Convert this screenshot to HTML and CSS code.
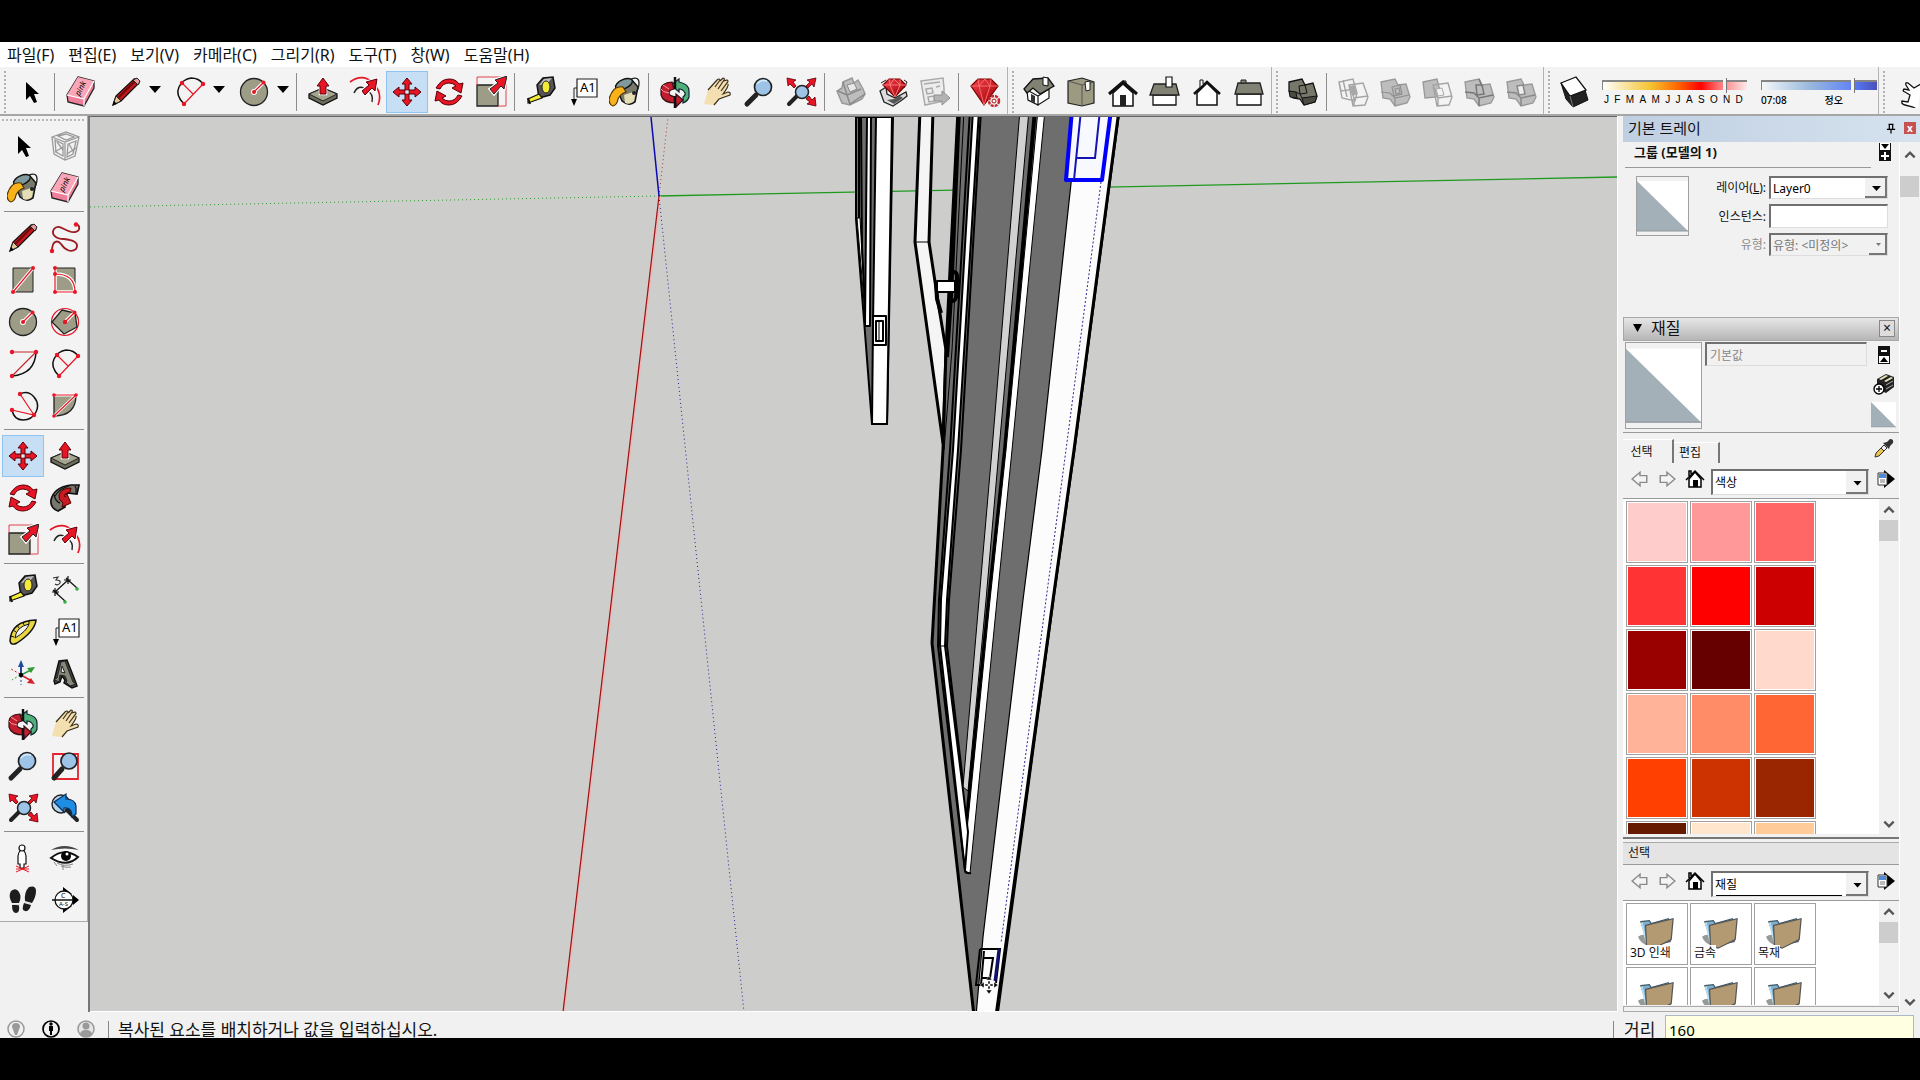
FILE: index.html
```html
<!DOCTYPE html>
<html lang="ko">
<head>
    <meta charset="UTF-8">
    <meta name="viewport" content="width=device-width, initial-scale=1.0">
    <title>SketchUp</title>
    <link rel="stylesheet" href="styles.css">
</head>
<body>
    <!-- Icon set shared by both toolbars and the tray -->
    <svg class="sprite" aria-hidden="true">
        <defs>
            <linearGradient id="gem-fill" x1="0" y1="0" x2="1" y2="1">
                <stop offset="0" stop-color="#f0404a"/><stop offset="1" stop-color="#a00008"/>
            </linearGradient>
            <symbol id="i-select" viewBox="0 0 32 32"><path d="M11 6v18l4-4 4 7 3-1-3-8h5z" fill="#000"/></symbol>
            <symbol id="i-component" viewBox="0 0 32 32"><g fill="none" stroke="#999" stroke-width="1.3"><path d="M3 7l14-5 13 5-4 19-10 4-11-6zM3 7l13 5 14-5M16 12v18M6 10l1 12 7 4V14zM19 14l8-3-3 13-6 3zM9 6l8-2 8 3-8 3z"/><path d="M6 22l8-5M18 24l9-6M8 12l6 8M20 14l5 9"/></g></symbol>
            <symbol id="i-paint" viewBox="0 0 32 32"><path d="M7 10l6 15q7 6 13 1l3-15-6-7z" fill="#77796b" stroke="#111" stroke-width="1.4"/><path d="M15 19l12-4-2 10q-4 4-9 2z" fill="#e5ddb3"/><ellipse cx="15" cy="8" rx="9" ry="4.500" transform="rotate(-24 15 8)" fill="#7f999d" stroke="#111" stroke-width="1.400"/><path d="M22 3q8-3 8 4t-4 10" fill="none" stroke="#222" stroke-width="1.300"/><circle cx="25" cy="17" r="2" fill="#222"/><path d="M14 11Q4 9 0 23q0 6 4 7 4-1 5-7 2-5 8-7z" fill="#f9b219" stroke="#4b3300" stroke-width="1.200"/></symbol>
            <symbol id="i-eraser" viewBox="0 0 32 32"><path d="M13 1l16 4v7L19 30 3 26l-1-7z" fill="#ee7e99" stroke="#222" stroke-width="1.300"/><path d="M13 1l16 4-10 18-17-4z" fill="#f9a6b8"/><path d="M2 19l17 4 10-18M19 23v7" fill="none" stroke="#fff" stroke-width="1.200"/><text x="11" y="19" font-size="8" font-family="Liberation Serif" font-style="italic" transform="rotate(-64 14 17)">pink</text></symbol>
            <symbol id="i-line" viewBox="0 0 32 32"><path d="M3 29l3-9L24 3q5-1 5 4L11 25z" fill="#c4161d" stroke="#111" stroke-width="1.300"/><path d="M8 22L25 5" stroke="#6b0a0e" stroke-width="2"/><path d="M6 20l5 5-8 4z" fill="#dfc99a" stroke="#222"/><path d="M3 29l1-4 3 3z" fill="#000"/><path d="M23 4l5 5 2-4-3-3z" fill="#e49c9c" stroke="#222"/></symbol>
            <symbol id="i-freehand" viewBox="0 0 32 32"><path d="M3 29C3 18 9 18 12 22c4 6 10 9 15 5 4-7-4-9-12-10C6 17 2 12 5 7c5-7 13 5 21 3 6-1 5-7 1-8" fill="none" stroke="#9c1a22" stroke-width="1.800"/><circle cx="3" cy="29" r="2.200" fill="#e81525"/><circle cx="27" cy="2.500" r="2.200" fill="#e81525"/></symbol>
            <symbol id="i-rect" viewBox="0 0 32 32"><path d="M6 4h20v24H6z" fill="#9d9c87" stroke="#222"/><path d="M6 28L26 4" stroke="#fff" stroke-width="3.500"/><path d="M6 28L26 4" stroke="#e81525" stroke-width="1.200"/><circle cx="6" cy="28" r="2" fill="#e81525"/><circle cx="26" cy="4" r="2" fill="#e81525"/></symbol>
            <symbol id="i-rotrect" viewBox="0 0 32 32"><path d="M6 4h20v24H6z" fill="#9d9c87" stroke="#222"/><path d="M6 4v24h20M6 10q20 0 20 18" fill="none" stroke="#fff" stroke-width="3.500"/><path d="M6 4v24h20M6 10q20 0 20 18" fill="none" stroke="#e81525" stroke-width="1.200"/><circle cx="6" cy="4" r="2" fill="#e81525"/><circle cx="6" cy="10" r="2" fill="#e81525"/><circle cx="6" cy="28" r="2" fill="#e81525"/><circle cx="26" cy="28" r="2" fill="#e81525"/></symbol>
            <symbol id="i-circle" viewBox="0 0 32 32"><circle cx="16" cy="16" r="13.500" fill="#9d9c87" stroke="#222" stroke-width="1.300"/><path d="M16 16l9-9" stroke="#fff" stroke-width="3.500"/><circle cx="16" cy="16" r="3" fill="#fff"/><path d="M16 16l9-9" stroke="#e81525" stroke-width="1.300"/><circle cx="16" cy="16" r="2" fill="#e81525"/><circle cx="25.500" cy="6.500" r="2" fill="#e81525"/></symbol>
            <symbol id="i-polygon" viewBox="0 0 32 32"><circle cx="16" cy="16" r="13.500" fill="none" stroke="#e81525" stroke-width="1.200"/><path d="M13 4l13 3 2 14-13 7L3 16z" fill="#9d9c87" stroke="#222" stroke-width="1.300"/><path d="M16 16l9-9" stroke="#fff" stroke-width="3.500"/><path d="M16 16l9-9" stroke="#e81525" stroke-width="1.300"/><circle cx="16" cy="16" r="2.200" fill="#e81525"/><circle cx="25.500" cy="6.500" r="2" fill="#e81525"/></symbol>
            <symbol id="i-arc" viewBox="0 0 32 32"><path d="M5 28Q28 26 29 4" fill="none" stroke="#111" stroke-width="1.500"/><path d="M5 4h24L5 28" fill="none" stroke="#c4262d" stroke-width="1.200"/><circle cx="5" cy="4" r="2.200" fill="#e81525"/><circle cx="29" cy="4" r="2.200" fill="#e81525"/><circle cx="5" cy="28" r="2.200" fill="#e81525"/></symbol>
            <symbol id="i-arc2" viewBox="0 0 32 32"><path d="M10 28Q1 19 5 11T17 2q8 0 12 6" fill="none" stroke="#111" stroke-width="1.500"/><path d="M10 28L29 8M8 7l11 11" stroke="#e81525" stroke-width="1.200"/><circle cx="10" cy="28" r="2.200" fill="#e81525"/><circle cx="29" cy="8" r="2.200" fill="#e81525"/><circle cx="8" cy="7" r="2.200" fill="#e81525"/></symbol>
            <symbol id="i-arc3" viewBox="0 0 32 32"><path d="M13 4q8-4 14 3t2 15-13 8-11-10" fill="none" stroke="#111" stroke-width="1.500"/><path d="M13 4l14 21-22-5" fill="none" stroke="#e81525" stroke-width="1.200"/><circle cx="13" cy="4" r="2.200" fill="#e81525"/><circle cx="27" cy="25" r="2.200" fill="#e81525"/><circle cx="5" cy="20" r="2.200" fill="#e81525"/></symbol>
            <symbol id="i-pie" viewBox="0 0 32 32"><path d="M5 5h22Q27 26 5 26z" fill="#9d9c87" stroke="#222" stroke-width="1.300"/><path d="M27 5H5M5 26L27 5" fill="none" stroke="#fff" stroke-width="3"/><path d="M5 5h22L5 26" fill="none" stroke="#e81525" stroke-width="1.200"/><circle cx="5" cy="5" r="1.800" fill="#e81525"/><circle cx="27" cy="5" r="1.800" fill="#e81525"/><circle cx="5" cy="26" r="1.800" fill="#e81525"/></symbol>
            <symbol id="i-pushpull" viewBox="0 0 32 32"><path d="M2 18l14-6 14 6v4L16 29 2 22z" fill="#6d6d5c" stroke="#111" stroke-width="1.300"/><path d="M2 18l14-6 14 6-14 7z" fill="#a5a58f" stroke="#222"/><path d="M13 18v-8h-3l6-8 6 8h-3v8z" fill="#e81525" stroke="#fff" stroke-width="2.500"/><path d="M13 18v-8h-3l6-8 6 8h-3v8z" fill="#e81525" stroke="#5c0006"/></symbol>
            <symbol id="i-offset" viewBox="0 0 32 32"><path d="M1 6Q14-3 24 7t5 22" fill="none" stroke="#e81525" stroke-width="1.700"/><path d="M5 17q4-9 12-4t6 13" fill="none" stroke="#222" stroke-width="1.400"/><path d="M13 15l7-6-3-3 11-3-2 12-3-3-7 7z" fill="#e81525" stroke="#fff" stroke-width="3"/><path d="M13 15l7-6-3-3 11-3-2 12-3-3-7 7z" fill="#e81525" stroke="#5c0006"/></symbol>
            <symbol id="i-move" viewBox="0 0 32 32"><path d="M16 2l5 6h-3v6h-4V8h-3zM16 30l5-6h-3v-6h-4v6h-3zM2 16l6-5v3h6v4H8v3zM30 16l-6-5v3h-6v4h6v3z" fill="#e81525" stroke="#5c0006"/><path d="M14.500 14.500h3v3h-3z" fill="#d9e8f5"/></symbol>
            <symbol id="i-rotate" viewBox="0 0 32 32"><path d="M3 12Q8 3 16 3q7 0 10 5l4-1-2 10-9-5 4-2q-3-3-7-3-6 0-9 6z" fill="#e81525" stroke="#5c0006"/><path d="M29 20q-5 9-13 9-7 0-10-5l-4 1 2-10 9 5-4 2q3 3 7 3 6 0 9-6z" fill="#e81525" stroke="#5c0006"/></symbol>
            <symbol id="i-scale" viewBox="0 0 32 32"><path d="M2 9h21v21H2z" fill="#9d9c87" stroke="#222" stroke-width="1.300"/><path d="M2 1h29v29H23M2 1v8" fill="none" stroke="#e0444c"/><path d="M15 13l8-6-3-3 12-4-3 13-3-3-7 8z" fill="#e81525" stroke="#fff" stroke-width="3"/><path d="M15 13l8-6-3-3 12-4-3 13-3-3-7 8z" fill="#e81525" stroke="#222"/></symbol>
            <symbol id="i-followme" viewBox="0 0 32 32"><path d="M30 3L22 3Q5 5 2 18q-1 8 7 11l7-4-1-6q-3-4 3-8l10 1z" fill="#77776b" stroke="#111" stroke-width="1.700"/><path d="M5 13q2 7 6 8M20 4q-10 3-14 10M26 4q2 3 1 7" fill="none" stroke="#111" stroke-width="1.300"/><path d="M22 6q-10 0-12 7-1 5 4 8l-1 4 9-4-4-9-2 3q-2-3 5-5z" fill="#c61b20" stroke="#500"/></symbol>
            <symbol id="i-tape" viewBox="0 0 32 32"><path d="M12 9l6-7 10-1 2 11-5 7-11 3z" fill="#555" stroke="#111" stroke-width="1.500"/><path d="M14 9l5-6 8-1-5 6z" fill="#bbb"/><ellipse cx="21" cy="11" rx="4" ry="6" fill="#f5ea37" stroke="#222"/><path d="M14 18L3 23v4l14-5z" fill="#f5ea37" stroke="#111" stroke-width="1.200"/><path d="M3 22l2 6" stroke="#111" stroke-width="2"/></symbol>
            <symbol id="i-dimension" viewBox="0 0 32 32"><path d="M6 18L19 6M6 18l10 9M19 6l9 8M3 18h7M6 14v8M15 6h7M19 2v8M4 16l5 4M17 4l4 4" stroke="#111" stroke-width="1.200" fill="none"/><path d="M4 4l5-1-2 3q5 0 4 3-2 3-5 1" fill="none" stroke="#333" stroke-width="1.200"/><circle cx="16" cy="28" r="1.800" fill="#36ae45"/><circle cx="28" cy="15" r="1.800" fill="#36ae45"/></symbol>
            <symbol id="i-protractor" viewBox="0 0 32 32"><path d="M3 25Q4 5 29 4 28 15 10 27q-6 3-7-2z" fill="#e9d843" stroke="#111" stroke-width="1.500"/><path d="M8 22Q9 11 22 8 20 15 8 22z" fill="#f3f3f3" stroke="#111"/><path d="M4 20l3 1M6 14l3 2M10 9l2 3M16 6l1 3M22 5v3" stroke="#111"/></symbol>
            <symbol id="i-text" viewBox="0 0 32 32"><path d="M10 3h20v18H10z" fill="#fff" stroke="#222" stroke-width="1.200"/><path d="M10 12H7v12" fill="none" stroke="#222"/><path d="M4 23h6l-3 7z"/><text x="13" y="16" font-size="13" font-family="Liberation Serif">A1</text></symbol>
            <symbol id="i-axes" viewBox="0 0 32 32"><path d="M14 17V7" stroke="#1e4b9c" stroke-width="2"/><path d="M14 2l-3 7h6z" fill="#1e4b9c"/><path d="M14 18v9" stroke="#1e4b9c" stroke-dasharray="2 2"/><path d="M14 17l10-5" stroke="#2d9a37" stroke-width="1.500"/><path d="M28 9l-8 1 4 5z" fill="#2d9a37"/><path d="M13 17l-8 5" stroke="#2d9a37" stroke-dasharray="2 2"/><path d="M14 17l9 5" stroke="#d4222c" stroke-width="1.500"/><path d="M28 26l-8-1 4-5z" fill="#d4222c"/><path d="M13 16l-9-5" stroke="#d4222c" stroke-dasharray="2 2"/><circle cx="14" cy="17" r="2.200"/></symbol>
            <symbol id="i-text3d" viewBox="0 0 32 32"><path d="M5 23l5-20 8-1 9 23 1 3-5 2-8-5 1-3-3-4-2 6-5 2z" fill="#45453d" stroke="#111" stroke-width="1.500"/><path d="M5 22l3-2 4-16 4-1 8 21 3 2-6 2-4-4 1-1-2-5-5-1-1 5 1 2z" fill="#88887a" stroke="#222"/><path d="M12 14l1-6 3 7z" fill="#f3f3f3" stroke="#222"/></symbol>
            <symbol id="i-orbit" viewBox="0 0 32 32"><path d="M12 9l8-6v3q10 2 10 9v6q-1 4-6 6v-6q3-2 2-4-2-4-6-4v3z" fill="#4fb179" stroke="#123" stroke-width="1.200"/><path d="M13 6Q2 7 2 13v6q2 8 15 8v4l7-7-7-6v3q-7-1-7-4 0-3 5-4z" fill="#c11d2f" stroke="#311" stroke-width="1.200"/><path d="M2 13q1 3 8 4M4 9l6 4" fill="none" stroke="#f0a0a0"/><path d="M16 1v12M16 20v12" stroke="#111" stroke-width="2.500"/></symbol>
            <symbol id="i-pan" viewBox="0 0 32 32"><path d="M3 28l4-14L16 4q2-2 3 0l3-2q2 0 1 2l3 0q2 1 0 3l2 1q0 2-2 4l-4 6 5-2q3 0 2 3L18 23l-5 6z" fill="#f3dfb0"/><path d="M7 14l9-10q2-2 3 0l-5 7M19 5l3-3q2 0 1 2l-6 9M23 5l3-1q2 1 0 3l-6 8M27 8q1 2-5 10l5-2q3 0 2 3L18 23l-5 6" fill="none" stroke="#3b3020" stroke-width="1.200"/></symbol>
            <symbol id="i-zoom" viewBox="0 0 32 32"><path d="M4 28l9-9" stroke="#222" stroke-width="5" stroke-linecap="round"/><circle cx="20" cy="11" r="8.500" fill="#9dc3e6" stroke="#222" stroke-width="1.700"/><path d="M14 8q4-5 10-3" fill="none" stroke="#d9ecfb" stroke-width="1.500"/></symbol>
            <symbol id="i-zoomwin" viewBox="0 0 32 32"><path d="M4 4h25v25H4z" fill="none" stroke="#e3252f" stroke-width="1.800"/><path d="M5 28l8-9" stroke="#222" stroke-width="5" stroke-linecap="round"/><circle cx="20" cy="11" r="8" fill="#9dc3e6" stroke="#222" stroke-width="1.700"/></symbol>
            <symbol id="i-extents" viewBox="0 0 32 32"><path d="M4 28l8-8" stroke="#222" stroke-width="4" stroke-linecap="round"/><circle cx="17" cy="16" r="6.500" fill="#9dc3e6" stroke="#222" stroke-width="1.500"/><g fill="#e81525" stroke="#5c0006" stroke-width=".8"><path d="M2 2l9 2-3 2 3 4-2 2-4-4-2 2z"/><path d="M31 2l-2 9-2-3-4 4-2-2 4-4-3-2z"/><path d="M31 30l-9-2 3-2-4-3 3-3 3 4 3-3z"/></g></symbol>
            <symbol id="i-prev" viewBox="0 0 32 32"><circle cx="12" cy="12" r="9" fill="#b7d4ed" stroke="#222" stroke-width="1.400"/><path d="M18 18l10 10" stroke="#222" stroke-width="4" stroke-linecap="round"/><path d="M5 10l12-8v5q9 0 10 7v8l-4 3q0-10-8-9v4z" fill="#1e8de4" stroke="#0a2d55" stroke-width="1.200"/></symbol>
            <symbol id="i-camera" viewBox="0 0 32 32"><path d="M11 22v-8q1-6 4-6t4 6v8h-2v4h-4v-4z" fill="#fff" stroke="#111" stroke-width="1.200"/><circle cx="15" cy="6" r="3" fill="#fff" stroke="#111" stroke-width="1.200"/><path d="M9 24l13 6M22 24L9 30M9 27h13" stroke="#e81525"/></symbol>
            <symbol id="i-look" viewBox="0 0 32 32"><path d="M2 8Q15 0 30 8q-14-3-28 0z" fill="#444"/><path d="M2 16Q15 5 29 15q-11 11-27 1z" fill="#fff" stroke="#111" stroke-width="2"/><circle cx="17" cy="14" r="5"/><circle cx="18" cy="12" r="1.500" fill="#fff"/><path d="M8 21q7 4 16 1M12 24q5 2 10 1M5 20l3 4M14 23v5" stroke="#888" fill="none"/></symbol>
            <symbol id="i-walk" viewBox="0 0 32 32"><path d="M4 7q5-4 8 1t0 11l-7 0Q1 12 4 7zM5 21h7q1 8-3 8t-4-8zM22 3q7-2 7 4t-4 12l-7-2q-1-9 4-14zM17 19l7 2q-2 7-6 6t-1-8z" fill="#1d1d1d"/><path d="M5 20l8 1M17 18l8 2" stroke="#ddd"/></symbol>
            <symbol id="i-section" viewBox="0 0 32 32"><path d="M14 3l9 7H14zM14 29l9-7H14z"/><circle cx="15" cy="16" r="9" fill="#fff" stroke="#111" stroke-width="1.300"/><path d="M3 16h25" stroke="#111" stroke-width="1.500"/><path d="M24 11l6 5-6 5z"/><text x="12" y="14" font-size="7" font-family="Liberation Sans">C</text><text x="10" y="22" font-size="6" font-family="Liberation Sans">A-S</text></symbol>
            <symbol id="i-getmodel" viewBox="0 0 32 32"><path d="M8 6l9-4 2 5 4-3 5 9 2 5-3 5-12 6-8-2-5-12 5-3z" fill="#bdbdbd" stroke="#999" stroke-width="1.500"/><path d="M3 15l9 4 3 9 15-10M12 19l14-6M8 6l4 13" fill="none" stroke="#8a8a8a" stroke-width="1.500"/><path d="M12 9l7-2 3 6-7 3z" fill="#e8e8e8" stroke="#888"/></symbol>
            <symbol id="i-warehouse" viewBox="0 0 32 32"><path d="M3 15l6-4 1 7 8 4 11-6 1 4-5 4-9 6-9-4z" fill="#ddd" stroke="#222" stroke-width="1.300"/><path d="M10 24l7 4 9-6-3-2-6 3z" fill="#555"/><path d="M27 4l3 2-3 6M4 7l5-3" stroke="#222" fill="none"/><path d="M6 9l6-6h11l6 6-11 12z" fill="url(#gem-fill)" stroke="#700" stroke-width="1.200"/><path d="M6 9h23M12 3l1 6 5 12 5-12V3M13 9l4-6 6 6" fill="none" stroke="#ff8b8b" stroke-width=".8"/></symbol>
            <symbol id="i-share" viewBox="0 0 32 32"><path d="M2 5l22-3 1 10v13l-19 4z" fill="#ececec" stroke="#aaa" stroke-width="1.500"/><path d="M5 8l16-2M7 13l6-1 1 5-6 1zM17 11l4-1M9 21l6-1 1 5-6 1z" fill="none" stroke="#aaa" stroke-width="1.500"/><path d="M15 19h8v-4l8 7-8 7v-4h-8z" fill="#b3b3b3" stroke="#909090"/></symbol>
            <symbol id="i-extension" viewBox="0 0 32 32"><path d="M2 10l7-7h13l7 7-14 19z" fill="url(#gem-fill)" stroke="#700" stroke-width="1.200"/><path d="M2 10h27M9 3l1 7 5 19 6-19 1-7M10 10l6-7 5 7" fill="none" stroke="#ff7272" stroke-width=".9"/><circle cx="25" cy="25" r="5" fill="#f3f3f3" stroke="#c52b33" stroke-width="2.500" stroke-dasharray="3 1"/><circle cx="25" cy="25" r="2" fill="#fff" stroke="#a11"/></symbol>
            <symbol id="i-iso" viewBox="0 0 32 32"><path d="M4 14l11 6v9L5 24zM15 20l11-7v9l-11 7z" fill="#fff" stroke="#111" stroke-width="1.200"/><path d="M1 13L10 3l15-1 6 8-14 8-7-6-6 5z" fill="#818174" stroke="#111" stroke-width="1.300"/><path d="M20 9V1l5 1v8z" fill="#fff" stroke="#111"/><path d="M8 18l4 2v7l-4-2z" fill="#333"/></symbol>
            <symbol id="i-top" viewBox="0 0 32 32"><path d="M3 5l14-3 12 4v21l-12 3-14-3z" fill="#9c9a80" stroke="#222" stroke-width="1.200"/><path d="M3 5l14 4 12-3M17 9v21" fill="none" stroke="#555"/><path d="M20 6l5-1v9l-4 1z" fill="#fff" stroke="#222"/></symbol>
            <symbol id="i-front" viewBox="0 0 32 32"><path d="M6 17v13h20V17L16 8z" fill="#fff" stroke="#111" stroke-width="1.500"/><path d="M2 18L16 6l14 12" fill="none" stroke="#111" stroke-width="3"/><path d="M13 19h6v11h-6z" fill="#222"/><path d="M16 5h3v3" fill="none" stroke="#111"/></symbol>
            <symbol id="i-right" viewBox="0 0 32 32"><path d="M4 19h23v10H4z" fill="#fff" stroke="#111" stroke-width="1.300"/><path d="M5 8h22l3 11H1z" fill="#818174" stroke="#222" stroke-width="1.300"/><path d="M17 1h6v10h-6z" fill="#fff" stroke="#111" stroke-width="1.200"/></symbol>
            <symbol id="i-back" viewBox="0 0 32 32"><path d="M6 17v12h20V17L16 7z" fill="#fff" stroke="#111" stroke-width="1.500"/><path d="M3 18L16 6l13 12" fill="none" stroke="#111" stroke-width="2.500"/><path d="M9 11V4h3v4" fill="#fff" stroke="#111"/></symbol>
            <symbol id="i-left" viewBox="0 0 32 32"><path d="M4 18h24v11H4z" fill="#fff" stroke="#111" stroke-width="1.300"/><path d="M5 7h22l3 11H2z" fill="#818174" stroke="#222" stroke-width="1.300"/><path d="M8 4h5v3H8z" fill="#818174" stroke="#222"/></symbol>
            <symbol id="i-outer" viewBox="0 0 32 32"><path d="M2 6l13-3 3 6 8-2 4 13-2 6-11 3-4-6-7-1-4-7z" fill="#77776a" stroke="#111" stroke-width="1.300"/><path d="M2 15l1 6 7 1-1-6zM15 22l15-2-2 6-11 3z" fill="#4b4b41" stroke="#111"/><path d="M12 10l6-1 2 8-7 1zM9 16l4 2 2 4" fill="none" stroke="#111"/></symbol>
            <symbol id="i-intersect" viewBox="0 0 32 32"><g fill="none" stroke="#a4a4a4" stroke-width="1.400"><path d="M2 6l14-3 4 14-2 8-13-3zM2 6l2 9 15-2M12 9l14-2 5 14-3 8-12 1zM12 9l5 13 14-2M17 22v8M6 4l4 17"/></g><path d="M12 10l6-1 2 9-4 2z" fill="#a8a8a8"/></symbol>
            <symbol id="i-union" viewBox="0 0 32 32"><path d="M2 6l14-3 3 6 8-1 4 13-3 6-12 3-5-7-7-1z" fill="#bdbdbd" stroke="#999" stroke-width="1.300"/><path d="M2 16l9 1 5 5 14-3M16 22v8M13 11l8-2 2 9-8 2zM16 13l4-1 1 5-4 1z" fill="none" stroke="#909090" stroke-width="1.200"/></symbol>
            <symbol id="i-subtract" viewBox="0 0 32 32"><path d="M2 6l14-3 3 12-3 6-12 1z" fill="#bdbdbd" stroke="#999" stroke-width="1.300"/><path d="M12 9l15-2 4 14-3 8-12 1zM12 9l5 13 14-2M17 22v8" fill="none" stroke="#a4a4a4" stroke-width="1.400"/><path d="M15 13l6-1 2 7-6 1z" fill="#f3f3f3" stroke="#aaa"/></symbol>
            <symbol id="i-trim" viewBox="0 0 32 32"><path d="M2 6l14-3 3 6 8-1 4 13-3 6-12 3-5-7-7-1z" fill="#bdbdbd" stroke="#999" stroke-width="1.300"/><path d="M2 16l9 1 5 5 14-3M16 22v8M13 9h6l2 9-7 1zM16 3l3 7" fill="none" stroke="#777" stroke-width="1.500"/></symbol>
            <symbol id="i-split" viewBox="0 0 32 32"><path d="M2 6l14-3 3 6 8-1 4 13-3 6-12 3-5-7-7-1z" fill="#bdbdbd" stroke="#999" stroke-width="1.300"/><path d="M2 16l9 1 5 5 14-3M16 22v8" fill="none" stroke="#888" stroke-width="1.500"/><path d="M12 10l6-1 2 9-6 1z" fill="#eee" stroke="#888" stroke-width="1.500"/></symbol>
            <symbol id="i-shadow" viewBox="0 0 32 32"><path d="M2 7l5 16 7 8 15-7-3-10z" fill="#222" stroke="#111"/><path d="M2 7l15-6 10 13-16 6z" fill="#fff" stroke="#111" stroke-width="1.300"/><path d="M11 20l3 11" stroke="#777"/></symbol>
            <symbol id="i-sandbox" viewBox="0 0 32 32"><path d="M27 8l-7 4-6-5q-3-1-2 2l3 5-5-1q-2 2 1 3l5 3-2 7-6-1q-1 3 3 4l8 2 5 3" fill="#fff" stroke="#111" stroke-width="1.300"/></symbol>
            <symbol id="i-back-arrow" viewBox="0 0 16 16"><path d="M1 8l7-6v3h6v6H8v3z" fill="#f4f4f4" stroke="#8b8b8b" stroke-width="1.300"/></symbol>
            <symbol id="i-fwd-arrow" viewBox="0 0 16 16"><path d="M15 8L8 2v3H2v6h6v3z" fill="#f4f4f4" stroke="#8b8b8b" stroke-width="1.300"/></symbol>
            <symbol id="i-home" viewBox="0 0 20 20"><path d="M4 10v8h12v-8l-6-7z" fill="#fff" stroke="#000" stroke-width="1.500"/><path d="M1 11l9-9 9 9M4 7V2h2v3" fill="none" stroke="#000" stroke-width="1.500"/><path d="M8 11h5v7H8z"/></symbol>
            <symbol id="i-details" viewBox="0 0 18 18"><path d="M7 0l11 9-11 9z"/><path d="M1 3h9v12H1z" fill="#fff" stroke="#333"/><path d="M2 4h7v4H2z" fill="#4a8dd6"/><path d="M3 10h5M3 12h5" stroke="#777"/></symbol>
            <symbol id="i-dropper" viewBox="0 0 20 20"><path d="M1 19l1-4 8-8 3 3-8 8z" fill="#e9c34d" stroke="#333"/><path d="M7 10l3-3 3 3-3 3z" fill="#eee" stroke="#333"/><path d="M9 5l6 6 1-3 3-3q1-4-3-4l-3 3z" fill="#333"/></symbol>
            <symbol id="i-create" viewBox="0 0 22 22"><path d="M4 6l9-5 8 3v10l-8 6-9-4z" fill="#222"/><path d="M6 6l7-4 2 1-7 4zM11 8l7-4 2 1-7 4z" fill="#e8e5b9"/><path d="M13 12l7-4M13 16l7-4" stroke="#aaa"/><circle cx="6" cy="16" r="5" fill="#fff" stroke="#000" stroke-width="1.400"/><path d="M3 16h6M6 13v6" stroke="#000" stroke-width="1.300"/></symbol>
            <symbol id="i-expand" viewBox="0 0 12 18"><path d="M0 0h12v18H0z" fill="#111"/><path d="M1 0h10v7H1z" fill="#fff"/><path d="M2 1h8L6 6z"/><path d="M5 9h2v3h3v2H7v3H5v-3H2v-2h3z" fill="#fff"/></symbol>
            <symbol id="i-shrink" viewBox="0 0 12 18"><path d="M0 0h12v18H0z" fill="#111"/><path d="M1 10h10v7H1z" fill="#fff"/><path d="M2 16h8l-4-5z"/><path d="M3 4h6v2H3z" fill="#fff"/></symbol>
            <symbol id="i-default" viewBox="0 0 50 58" preserveAspectRatio="none"><path d="M0 4h50v50H0z" fill="#fff"/><path d="M0 4l50 50H0z" fill="#a3b0b8"/><path d="M0 54h50" stroke="#8e979c"/></symbol>
            <symbol id="i-folder" viewBox="0 0 40 36"><path d="M1 22q5-4 9-1l4 11Q4 30 1 22z" fill="#999"/><path d="M4 6l9-1 2 3 18-5 2 24-22 5z" fill="#7fb0cf" stroke="#3e5866" stroke-width="1.200"/><path d="M5 7l5 21" stroke="#b7dcf2" stroke-width="2"/><path d="M9 10l29-7-2 22-18 9-8-3z" fill="#b49a72" stroke="#555" stroke-width="1.300"/></symbol>
            <symbol id="i-up" viewBox="0 0 12 12"><path d="M2 8l4-4 4 4" fill="none" stroke="#555" stroke-width="2"/></symbol>
            <symbol id="i-down" viewBox="0 0 12 12"><path d="M2 4l4 4 4-4" fill="none" stroke="#555" stroke-width="2"/></symbol>
        </defs>
    </svg>

    <div class="app">
        <nav class="menubar">
            <button>파일(F)</button>
            <button>편집(E)</button>
            <button>보기(V)</button>
            <button>카메라(C)</button>
            <button>그리기(R)</button>
            <button>도구(T)</button>
            <button>창(W)</button>
            <button>도움말(H)</button>
        </nav>

        <div class="toolbar">
            <div class="tool-group">
                <span class="grip"></span>
                <button class="tool" aria-label="선택"><svg><use href="#i-select"/></svg></button>
                <span class="sep"></span>
                <button class="tool" aria-label="지우개"><svg><use href="#i-eraser"/></svg></button>
                <div class="split">
                    <button class="tool" aria-label="선"><svg><use href="#i-line"/></svg></button>
                    <button class="caret" aria-label="선 도구 목록"></button>
                </div>
                <div class="split">
                    <button class="tool" aria-label="호"><svg><use href="#i-arc2"/></svg></button>
                    <button class="caret" aria-label="호 도구 목록"></button>
                </div>
                <div class="split">
                    <button class="tool" aria-label="원"><svg><use href="#i-circle"/></svg></button>
                    <button class="caret" aria-label="도형 도구 목록"></button>
                </div>
                <span class="sep"></span>
                <button class="tool" aria-label="밀기/끌기"><svg><use href="#i-pushpull"/></svg></button>
                <button class="tool" aria-label="오프셋"><svg><use href="#i-offset"/></svg></button>
                <button class="tool active" aria-label="이동"><svg><use href="#i-move"/></svg></button>
                <button class="tool" aria-label="회전"><svg><use href="#i-rotate"/></svg></button>
                <button class="tool" aria-label="배율"><svg><use href="#i-scale"/></svg></button>
                <span class="sep"></span>
                <button class="tool" aria-label="줄자"><svg><use href="#i-tape"/></svg></button>
                <button class="tool" aria-label="텍스트"><svg><use href="#i-text"/></svg></button>
                <button class="tool" aria-label="페인트통"><svg><use href="#i-paint"/></svg></button>
                <span class="sep"></span>
                <button class="tool" aria-label="궤도"><svg><use href="#i-orbit"/></svg></button>
                <button class="tool" aria-label="이동 보기"><svg><use href="#i-pan"/></svg></button>
                <button class="tool" aria-label="확대/축소"><svg><use href="#i-zoom"/></svg></button>
                <button class="tool" aria-label="범위 확대"><svg><use href="#i-extents"/></svg></button>
                <span class="sep"></span>
                <button class="tool" aria-label="모델 가져오기"><svg><use href="#i-getmodel"/></svg></button>
                <button class="tool" aria-label="3D Warehouse"><svg><use href="#i-warehouse"/></svg></button>
                <button class="tool" aria-label="모델 공유"><svg><use href="#i-share"/></svg></button>
                <span class="sep"></span>
                <button class="tool" aria-label="확장 프로그램"><svg><use href="#i-extension"/></svg></button>
            </div>
            <div class="tool-group">
                <span class="grip"></span>
                <button class="tool" aria-label="등각"><svg><use href="#i-iso"/></svg></button>
                <button class="tool" aria-label="상단"><svg><use href="#i-top"/></svg></button>
                <button class="tool" aria-label="전면"><svg><use href="#i-front"/></svg></button>
                <button class="tool" aria-label="우측"><svg><use href="#i-right"/></svg></button>
                <button class="tool" aria-label="후면"><svg><use href="#i-back"/></svg></button>
                <button class="tool" aria-label="좌측"><svg><use href="#i-left"/></svg></button>
            </div>
            <div class="tool-group">
                <span class="grip"></span>
                <button class="tool" aria-label="외부 셸"><svg><use href="#i-outer"/></svg></button>
                <span class="sep"></span>
                <button class="tool" aria-label="교차"><svg><use href="#i-intersect"/></svg></button>
                <button class="tool" aria-label="결합"><svg><use href="#i-union"/></svg></button>
                <button class="tool" aria-label="빼기"><svg><use href="#i-subtract"/></svg></button>
                <button class="tool" aria-label="트리밍"><svg><use href="#i-trim"/></svg></button>
                <button class="tool" aria-label="분할"><svg><use href="#i-split"/></svg></button>
            </div>
            <div class="tool-group">
                <span class="grip"></span>
                <button class="tool" aria-label="그림자"><svg><use href="#i-shadow"/></svg></button>
                <div class="sun">
                    <input class="range range-date" type="range" min="0" max="100" value="86" aria-label="날짜">
                    <div class="months"><span>J</span><span>F</span><span>M</span><span>A</span><span>M</span><span>J</span><span>J</span><span>A</span><span>S</span><span>O</span><span>N</span><span>D</span></div>
                </div>
                <div class="sun sun-time">
                    <input class="range range-time" type="range" min="0" max="100" value="80" aria-label="시간">
                    <div class="hours"><span>07:08</span><span>정오</span></div>
                </div>
            </div>
            <div class="tool-group">
                <span class="grip"></span>
                <button class="tool" aria-label="샌드박스"><svg><use href="#i-sandbox"/></svg></button>
            </div>
        </div>

        <div class="workspace">
            <aside class="palette">
                <div class="palette-tools">
                    <span class="grip-h"></span>
                    <button class="tool" aria-label="선택"><svg><use href="#i-select"/></svg></button>
                    <button class="tool" aria-label="구성요소 만들기"><svg><use href="#i-component"/></svg></button>
                    <button class="tool" aria-label="페인트통"><svg><use href="#i-paint"/></svg></button>
                    <button class="tool" aria-label="지우개"><svg><use href="#i-eraser"/></svg></button>
                    <span class="sep-h"></span>
                    <button class="tool" aria-label="선"><svg><use href="#i-line"/></svg></button>
                    <button class="tool" aria-label="프리핸드"><svg><use href="#i-freehand"/></svg></button>
                    <button class="tool" aria-label="직사각형"><svg><use href="#i-rect"/></svg></button>
                    <button class="tool" aria-label="회전된 직사각형"><svg><use href="#i-rotrect"/></svg></button>
                    <button class="tool" aria-label="원"><svg><use href="#i-circle"/></svg></button>
                    <button class="tool" aria-label="다각형"><svg><use href="#i-polygon"/></svg></button>
                    <button class="tool" aria-label="호"><svg><use href="#i-arc"/></svg></button>
                    <button class="tool" aria-label="2포인트 호"><svg><use href="#i-arc2"/></svg></button>
                    <button class="tool" aria-label="3포인트 호"><svg><use href="#i-arc3"/></svg></button>
                    <button class="tool" aria-label="파이"><svg><use href="#i-pie"/></svg></button>
                    <span class="sep-h"></span>
                    <button class="tool active" aria-label="이동"><svg><use href="#i-move"/></svg></button>
                    <button class="tool" aria-label="밀기/끌기"><svg><use href="#i-pushpull"/></svg></button>
                    <button class="tool" aria-label="회전"><svg><use href="#i-rotate"/></svg></button>
                    <button class="tool" aria-label="따라가기"><svg><use href="#i-followme"/></svg></button>
                    <button class="tool" aria-label="배율"><svg><use href="#i-scale"/></svg></button>
                    <button class="tool" aria-label="오프셋"><svg><use href="#i-offset"/></svg></button>
                    <span class="sep-h"></span>
                    <button class="tool" aria-label="줄자"><svg><use href="#i-tape"/></svg></button>
                    <button class="tool" aria-label="치수"><svg><use href="#i-dimension"/></svg></button>
                    <button class="tool" aria-label="각도기"><svg><use href="#i-protractor"/></svg></button>
                    <button class="tool" aria-label="텍스트"><svg><use href="#i-text"/></svg></button>
                    <button class="tool" aria-label="축"><svg><use href="#i-axes"/></svg></button>
                    <button class="tool" aria-label="3D 텍스트"><svg><use href="#i-text3d"/></svg></button>
                    <span class="sep-h"></span>
                    <button class="tool" aria-label="궤도"><svg><use href="#i-orbit"/></svg></button>
                    <button class="tool" aria-label="이동 보기"><svg><use href="#i-pan"/></svg></button>
                    <button class="tool" aria-label="확대/축소"><svg><use href="#i-zoom"/></svg></button>
                    <button class="tool" aria-label="창 확대"><svg><use href="#i-zoomwin"/></svg></button>
                    <button class="tool" aria-label="범위 확대"><svg><use href="#i-extents"/></svg></button>
                    <button class="tool" aria-label="이전"><svg><use href="#i-prev"/></svg></button>
                    <span class="sep-h"></span>
                    <button class="tool" aria-label="카메라 배치"><svg><use href="#i-camera"/></svg></button>
                    <button class="tool" aria-label="둘러보기"><svg><use href="#i-look"/></svg></button>
                    <button class="tool" aria-label="걷기"><svg><use href="#i-walk"/></svg></button>
                    <button class="tool" aria-label="단면"><svg><use href="#i-section"/></svg></button>
                </div>
            </aside>

            <main class="viewport">
                <svg class="scene" viewBox="90 117 1527 894" preserveAspectRatio="xMidYMid slice">
                    <!-- axes -->
                    <g fill="none">
                        <path d="M659 196L90 207" stroke="#2f9a2f" stroke-dasharray="1 3"/>
                        <path d="M659 196L1617 177" stroke="#1f9a1f" stroke-width="1.300"/>
                        <path d="M660 196L564 1012" stroke="#f0b4b4" stroke-width="2"/>
                        <path d="M659 196L563 1012" stroke="#9c1010" stroke-width="1.200"/>
                        <path d="M659 196L668 117" stroke="#b03030" stroke-dasharray="1 3"/>
                        <path d="M659 196L651 117" stroke="#0a0ab0" stroke-width="1.500"/>
                        <path d="M659 196L744 1012" stroke="#2020a0" stroke-dasharray="1 3"/>
                    </g>

                    <!-- far board -->
                    <g stroke="#000" stroke-linejoin="round">
                        <path d="M856 117L893 117 887 424 872 424 864 320 856 219z" fill="#6e6e6e" stroke-width="2"/>
                        <path d="M857 218h3l6 108z" fill="#fff" stroke-width="1"/>
                        <path d="M859 117v101M861 117l1 130 4 80" fill="none" stroke-width="2"/>
                        <path d="M867 117h4l-1 209h-5z" fill="#fff" stroke-width="2"/>
                        <path d="M876 117h16l-5 307h-15l1-100z" fill="#fff" stroke-width="2"/>
                        <path d="M873 316h13v29h-13zM876 321h7v20h-7z" fill="#fff" stroke-width="2"/>
                        <path d="M879 322v18" stroke-width="1"/>
                    </g>

                    <!-- bent board -->
                    <g stroke="#000" stroke-linejoin="round">
                        <path d="M920 110l-5 132 28 201 3-93-7-42-10-66 4-132" fill="#f5f5f5" stroke-width="3"/>
                        <path d="M915 242h14" stroke-width="1"/>
                    </g>

                    <!-- near board -->
                    <g stroke="#000" stroke-linejoin="round">
                        <path d="M958 110L1119 110 1074 450 1053 600 997 1016 974 1016 932 643 943 450 946 350z" fill="#6e6e6e" stroke-width="3"/>
                        <path d="M1079 110h40l-45 340-21 150-56 416h-21l7-79 40-337 19-150z" fill="#fcfcfc" stroke="none"/>
                        <path d="M1079 110L1042 450 1023 600 983 937 976 1016" fill="none" stroke-width="1.200"/>
                        <path d="M1119 110L1074 450 1053 600 996 1016" fill="none" stroke-width="3"/>
                        <path d="M1020 110h9L999 450l-13 150-18 191-5-4 16-187 13-150z" fill="#d1d1d1" stroke-width="1"/>
                        <path d="M1035 110L1005 450l-16 150-22 220" fill="none" stroke-width="4"/>
                        <path d="M1038 110h7L1012 450l-15 150-27 273h-5l2-43 23-230 16-150z" fill="#fff" stroke-width="1"/>
                        <path d="M973 110h6L958 450l-11 150-2 46 17 136 6 50-3 38-25-225 1-46 12-149z" fill="#fff" stroke-width="2"/>
                        <path d="M981 110L961 450l-12 150-2 46 16 136" fill="none" stroke-width="2"/>
                        <path d="M940 646h5" stroke-width="1"/>
                        <path d="M970 110L950 450l-11 150-1 46 27 225q3 3 6 2" fill="none" stroke-width="2"/>
                        <path d="M959 110L951 297l-4 60" fill="none" stroke-width="4"/>
                        <path d="M964 110L952 350l-8 100" fill="none" stroke-width="1"/>
                        <path d="M954 272q4 0 3 10v12q-1 7-5 7M936 283l1 16 4 14" fill="none" stroke-width="4"/>
                        <path d="M937 281h18v11h-18z" fill="#fff" stroke-width="2"/>
                    </g>

                    <!-- selected group -->
                    <path d="M1072 110L1066 180 1102 180 1111 110" fill="#f8f8ff" stroke="#00f" stroke-width="4" stroke-linejoin="round"/>
                    <path d="M1081 110L1074 180M1077 158h18l5-48" fill="none" stroke="#1414b4" stroke-width="2"/>
                    <path d="M1101 182L1066 450 1046 600 1001 943" fill="none" stroke="#2a2a90" stroke-dasharray="2 2"/>

                    <!-- latch and move cursor -->
                    <path d="M980 949h20l-4 34M980 949l-4 36h5l3-34M984 958h9l-3 20h-8" fill="none" stroke="#000" stroke-width="2"/>
                    <path d="M999 949l-4 32" stroke="#101070" stroke-width="3"/>
                    <path d="M989 976l3 4h-6zM989 994l3-4h-6zM980 985l4-3v6zM998 985l-4-3v6zM988 981h2v3h-2zM988 986h2v3h-2zM985 984h3v2h-3zM990 984h3v2h-3z" stroke="#fff" stroke-width=".5"/>
                </svg>
            </main>

            <aside class="tray">
                <header class="tray-title">
                    <h1>기본 트레이</h1>
                    <button class="pin" aria-label="고정"><svg viewBox="0 0 12 12"><path d="M3 1h6M4 1v6M8 1v6M1 7h10M6 7v5" fill="none" stroke="#000" stroke-width="1.500"/></svg></button>
                    <button class="tray-close" aria-label="닫기">x</button>
                </header>
                <div class="tray-body">
                    <div class="panels">
                        <section class="entity">
                            <div class="entity-head">
                                <h2>그룹 (모델의 1)</h2>
                                <button class="mini" aria-label="세부정보"><svg class="toggle"><use href="#i-expand"/></svg></button>
                            </div>
                            <div class="entity-body">
                                <svg class="thumb"><use href="#i-default"/></svg>
                                <div class="fields">
                                    <label for="layer">레이어(<u>L</u>):</label>
                                    <div class="combo"><select id="layer"><option>Layer0</option></select></div>
                                    <label for="instance">인스턴스:</label>
                                    <input id="instance" class="field" type="text">
                                    <label for="type" class="muted">유형:</label>
                                    <div class="combo off"><select id="type" disabled><option>유형: &lt;미정의&gt;</option></select></div>
                                </div>
                            </div>
                        </section>

                        <section class="materials">
                            <header class="panel-head">
                                <span class="tri"></span>
                                <h2>재질</h2>
                                <button class="panel-close" aria-label="닫기">×</button>
                            </header>
                            <div class="preview">
                                <svg class="thumb thumb-big"><use href="#i-default"/></svg>
                                <input class="field name" type="text" value="기본값" disabled aria-label="재질 이름">
                                <div class="preview-tools">
                                    <button class="mini" aria-label="접기"><svg class="toggle"><use href="#i-shrink"/></svg></button>
                                    <button class="mini" aria-label="재질 만들기"><svg class="create"><use href="#i-create"/></svg></button>
                                    <button class="mini" aria-label="기본 재질"><svg class="reset"><use href="#i-default"/></svg></button>
                                </div>
                            </div>
                            <div class="tabs">
                                <button class="tab current">선택</button>
                                <button class="tab">편집</button>
                                <button class="mini dropper" aria-label="스포이드"><svg><use href="#i-dropper"/></svg></button>
                            </div>
                            <div class="browse">
                                <button class="mini" aria-label="뒤로"><svg class="nav"><use href="#i-back-arrow"/></svg></button>
                                <button class="mini" aria-label="앞으로"><svg class="nav"><use href="#i-fwd-arrow"/></svg></button>
                                <button class="mini" aria-label="홈"><svg class="home"><use href="#i-home"/></svg></button>
                                <div class="combo"><select aria-label="색상 목록"><option>색상</option></select></div>
                                <button class="mini" aria-label="세부정보"><svg class="details"><use href="#i-details"/></svg></button>
                            </div>
                            <div class="list colors">
                                <div class="grid">
                                    <button class="swatch" style="background-color: #ffcccc" aria-label="색상 1"></button>
                                    <button class="swatch" style="background-color: #ff9999" aria-label="색상 2"></button>
                                    <button class="swatch" style="background-color: #ff6666" aria-label="색상 3"></button>
                                    <button class="swatch" style="background-color: #ff3333" aria-label="색상 4"></button>
                                    <button class="swatch" style="background-color: #ff0000" aria-label="색상 5"></button>
                                    <button class="swatch" style="background-color: #cc0000" aria-label="색상 6"></button>
                                    <button class="swatch" style="background-color: #990000" aria-label="색상 7"></button>
                                    <button class="swatch" style="background-color: #660000" aria-label="색상 8"></button>
                                    <button class="swatch" style="background-color: #ffd9cc" aria-label="색상 9"></button>
                                    <button class="swatch" style="background-color: #ffb399" aria-label="색상 10"></button>
                                    <button class="swatch" style="background-color: #ff8c66" aria-label="색상 11"></button>
                                    <button class="swatch" style="background-color: #ff6633" aria-label="색상 12"></button>
                                    <button class="swatch" style="background-color: #ff4000" aria-label="색상 13"></button>
                                    <button class="swatch" style="background-color: #cc3300" aria-label="색상 14"></button>
                                    <button class="swatch" style="background-color: #992600" aria-label="색상 15"></button>
                                    <button class="swatch" style="background-color: #661a00" aria-label="색상 16"></button>
                                    <button class="swatch" style="background-color: #ffe6cc" aria-label="색상 17"></button>
                                    <button class="swatch" style="background-color: #ffcc99" aria-label="색상 18"></button>
                                </div>
                                <div class="scroll">
                                    <button aria-label="위로"><svg><use href="#i-up"/></svg></button>
                                    <span class="scroll-thumb"></span>
                                    <button class="scroll-end" aria-label="아래로"><svg><use href="#i-down"/></svg></button>
                                </div>
                            </div>
                            <div class="sash"></div>
                            <h3 class="second-head">선택</h3>
                            <div class="browse">
                                <button class="mini" aria-label="뒤로"><svg class="nav"><use href="#i-back-arrow"/></svg></button>
                                <button class="mini" aria-label="앞으로"><svg class="nav"><use href="#i-fwd-arrow"/></svg></button>
                                <button class="mini" aria-label="홈"><svg class="home"><use href="#i-home"/></svg></button>
                                <div class="combo lined"><select aria-label="재질 목록"><option>재질</option></select></div>
                                <button class="mini" aria-label="세부정보"><svg class="details"><use href="#i-details"/></svg></button>
                            </div>
                            <div class="list folders">
                                <div class="grid">
                                    <button class="folder"><svg><use href="#i-folder"/></svg><span>3D 인쇄</span></button>
                                    <button class="folder"><svg><use href="#i-folder"/></svg><span>금속</span></button>
                                    <button class="folder"><svg><use href="#i-folder"/></svg><span>목재</span></button>
                                    <button class="folder" aria-label="폴더 4"><svg><use href="#i-folder"/></svg></button>
                                    <button class="folder" aria-label="폴더 5"><svg><use href="#i-folder"/></svg></button>
                                    <button class="folder" aria-label="폴더 6"><svg><use href="#i-folder"/></svg></button>
                                </div>
                                <div class="scroll">
                                    <button aria-label="위로"><svg><use href="#i-up"/></svg></button>
                                    <span class="scroll-thumb"></span>
                                    <button class="scroll-end" aria-label="아래로"><svg><use href="#i-down"/></svg></button>
                                </div>
                            </div>
                            <div class="next-panel"></div>
                        </section>
                    </div>
                    <div class="scroll scroll-main">
                        <button aria-label="위로"><svg><use href="#i-up"/></svg></button>
                        <span class="scroll-thumb"></span>
                        <button class="scroll-end" aria-label="아래로"><svg><use href="#i-down"/></svg></button>
                    </div>
                </div>
            </aside>
        </div>

        <footer class="statusbar">
            <div class="status-main">
                <svg class="badge" viewBox="0 0 18 18"><circle cx="9" cy="9" r="8" fill="none" stroke="#999" stroke-width="1.500"/><path d="M9 3q4 0 4 4l-3 8H8L5 7q0-4 4-4z" fill="#999"/></svg>
                <svg class="badge" viewBox="0 0 18 18"><circle cx="9" cy="9" r="8" fill="none" stroke="#000" stroke-width="1.700"/><circle cx="9" cy="4" r="1.700"/><path d="M7 6h4v5h-1v4H8v-4H7z"/></svg>
                <svg class="badge" viewBox="0 0 18 18"><circle cx="9" cy="9" r="8" fill="#e6e6e6" stroke="#999" stroke-width="1.500"/><circle cx="9" cy="6" r="3.500" fill="#999"/><path d="M3 15q0-5 6-5t6 5q-6 4-12 0z" fill="#999"/></svg>
                <p>복사된 요소를 배치하거나 값을 입력하십시오.</p>
            </div>
            <div class="status-value">
                <label for="distance">거리</label>
                <input id="distance" type="text" value="160">
            </div>
        </footer>
    </div>
</body>
</html>
```
FILE: styles.css
```css
* {
    margin: 0;
    padding: 0;
    box-sizing: border-box;
    font-family: "Noto Sans", "Noto Sans CJK KR", sans-serif;
}

body {
    height: 100vh;
    padding: 42px 0;
    background: #000;
    color: #111;
    overflow: hidden;
}

button {
    border: none;
    background: none;
    color: inherit;
}

svg {
    display: block;
}

.sprite {
    position: absolute;
    width: 0;
    height: 0;
}

.app {
    display: flex;
    flex-direction: column;
    height: 100%;
    background: #f1f1f1;
}

/* menu */
.menubar {
    display: flex;
    flex: none;
    gap: 14px;
    height: 25px;
    padding: 2px 7px 0;
    background: #fff;
}

.menubar button {
    font-size: 16px;
    line-height: 23px;
    white-space: nowrap;
}

/* top toolbar */
.toolbar {
    display: flex;
    flex: none;
    height: 49px;
    background: #f3f3f3;
    border-bottom: 2px solid #a6a6a6;
    overflow: hidden;
}

.tool-group {
    display: flex;
    flex: none;
    align-items: center;
    padding: 2px 1px 0 0;
    border-right: 1px solid #b4b4b4;
}

.tool-group:last-child {
    border-right: none;
}

.grip {
    width: 2px;
    height: 42px;
    margin: 0 4px;
    background: repeating-linear-gradient(#b0b0b0 0 2px, transparent 2px 4px);
}

.tool {
    display: flex;
    flex: none;
    align-items: center;
    justify-content: center;
    width: 42px;
    height: 42px;
}

.tool svg {
    width: 32px;
    height: 32px;
}

.tool.active {
    background: #c6dff5;
    border: 1px solid #90c4f0;
}

.sep {
    width: 1px;
    height: 38px;
    margin: 0 5px 0 2px;
    background: #8c8c8c;
}

.split {
    display: flex;
    padding: 0 3px;
}

.caret {
    width: 16px;
}

.caret::before {
    content: "";
    display: block;
    margin: 0 auto 4px;
    width: 12px;
    height: 7px;
    background: #000;
    clip-path: polygon(0 0, 100% 0, 50% 100%);
}

.sun {
    width: 145px;
    margin: 0 14px 0 6px;
}

.sun-time {
    width: 116px;
    margin: 0;
}

.range {
    display: block;
    width: 100%;
    height: 16px;
    appearance: none;
    background: none;
}

.range::-webkit-slider-runnable-track {
    height: 10px;
    border-top: 2px solid #858585;
    border-left: 1px solid #858585;
}

.range-date::-webkit-slider-runnable-track {
    background: linear-gradient(90deg, #fff, #f4c430 33%, #f60 52%, #f00 68%, #ff7070 80%, #ffeaea);
}

.range-time::-webkit-slider-runnable-track {
    background: linear-gradient(90deg, #f4f8fa, #9bbbdc 40%, #6688f4 75%, #5570e8 85%, #4a50b8);
}

.range::-webkit-slider-thumb {
    appearance: none;
    width: 4px;
    height: 15px;
    margin-top: -4px;
    background: #f3f3f3;
    border-right: 1px solid #777;
}

.months,
.hours {
    display: flex;
    justify-content: space-between;
    padding: 0 4px 0 2px;
    font-size: 10px;
    font-weight: 500;
    line-height: 14px;
    color: #000;
}

.months span {
    font-family: "Liberation Sans", sans-serif;
}

.hours {
    padding: 0 34px 0 0;
}

/* workspace */
.workspace {
    display: flex;
    flex: 1;
    min-height: 0;
}

.palette {
    flex: none;
    width: 90px;
    border-right: 2px solid #777;
}

.palette-tools {
    display: flex;
    flex-wrap: wrap;
    align-content: flex-start;
    width: 88px;
    padding: 0 1px 0 2px;
    background: #f3f3f3;
    border-right: 1px solid #aaa;
    border-bottom: 1px solid #aaa;
}

.grip-h {
    width: 100%;
    height: 2px;
    margin: 3px 0 4px;
    background: repeating-linear-gradient(90deg, #b8b8b8 0 2px, transparent 2px 4px);
}

.sep-h {
    width: 80px;
    height: 1px;
    margin: 2px 2px 5px;
    background: #8c8c8c;
}

.viewport {
    flex: 1;
    min-width: 0;
    background: #cdcdcb;
    border-top: 1px solid #666;
    border-bottom: 1px solid #fff;
}

.scene {
    width: 100%;
    height: 100%;
}

/* tray */
.tray {
    display: flex;
    flex: none;
    flex-direction: column;
    width: 303px;
    padding-left: 5px;
    border-left: 1px solid #fff;
}

.tray-title {
    display: flex;
    flex: none;
    align-items: center;
    gap: 8px;
    height: 26px;
    padding: 0 4px 2px 5px;
    background: linear-gradient(90deg, #bfcfe2, #d6e2ee);
}

.tray-title h1 {
    flex: 1;
    font-size: 15px;
    font-weight: 400;
    line-height: 24px;
}

.pin svg {
    width: 10px;
    height: 11px;
}

.tray-close {
    width: 12px;
    height: 12px;
    background: #c75050;
    color: #fff;
    font-size: 10px;
    font-weight: 700;
    line-height: 10px;
}

.tray-body {
    display: flex;
    flex: 1;
    min-height: 0;
}

.panels {
    display: flex;
    flex: 1;
    flex-direction: column;
    min-width: 0;
    border-right: 1px solid #fff;
}

.mini svg {
    width: 20px;
    height: 20px;
}

.mini .toggle {
    width: 12px;
    height: 18px;
}

.entity {
    flex: none;
    height: 175px;
}

.entity-head {
    display: flex;
    align-items: flex-start;
    justify-content: space-between;
    height: 26px;
    padding: 1px 8px 0 11px;
    background: linear-gradient(#999, #999) 2px 100% / 246px 1px no-repeat;
}

.entity-head h2 {
    font-size: 13px;
    line-height: 18px;
}

.entity-body {
    display: flex;
    justify-content: space-between;
    padding: 8px 11px 0 13px;
}

.thumb {
    width: 53px;
    height: 60px;
    border: 1px solid #a0a0a0;
}

.fields {
    display: grid;
    grid-template-columns: auto 119px;
    gap: 5px 3px;
    align-items: center;
}

.fields label {
    font-size: 12px;
    line-height: 23px;
    text-align: right;
}

.fields .muted {
    color: #8d8d8d;
}

.combo {
    position: relative;
    height: 23px;
    background: #fff;
    border: 1px solid #ddd;
    border-top: 2px solid #707070;
    border-left: 2px solid #707070;
}

.combo select {
    display: block;
    width: 100%;
    height: 100%;
    padding-left: 2px;
    appearance: none;
    border: none;
    background: none;
    color: #000;
    font-size: 12px;
}

.combo::before {
    content: "";
    position: absolute;
    top: 0;
    right: 0;
    bottom: 0;
    width: 20px;
    background: #f1f1f1;
    border-right: 2px solid #777;
    border-bottom: 2px solid #777;
    pointer-events: none;
}

.combo::after {
    content: "";
    position: absolute;
    top: 8px;
    right: 6px;
    width: 9px;
    height: 5px;
    background: #000;
    clip-path: polygon(0 0, 100% 0, 50% 100%);
    pointer-events: none;
}

.off {
    background: #f1f1f1;
}

.off select {
    color: #777;
    opacity: 1;
}

.off::before {
    width: 16px;
}

.off::after {
    width: 5px;
    height: 3px;
    background: #777;
}

.field {
    width: 100%;
    height: 24px;
    padding: 0 3px;
    border: 1px solid #ddd;
    border-top: 2px solid #707070;
    border-left: 2px solid #707070;
    background: #fff;
    font-size: 12px;
}

.field:disabled {
    background: #f1f1f1;
    color: #888;
}

.materials {
    display: flex;
    flex: 1;
    flex-direction: column;
    min-height: 0;
}

.panel-head {
    display: flex;
    flex: none;
    align-items: center;
    gap: 9px;
    height: 24px;
    padding: 0 3px 2px 9px;
    background: linear-gradient(#e6e6e6, #b6b6b6);
    border: 1px solid #a8a8a8;
}

.panel-head h2 {
    flex: 1;
    font-size: 16px;
    font-weight: 400;
    line-height: 20px;
}

.tri {
    width: 9px;
    height: 8px;
    background: #000;
    clip-path: polygon(0 0, 100% 0, 50% 100%);
}

.panel-close {
    width: 16px;
    height: 17px;
    border: 1px solid #888;
    background: #ddd;
    font-size: 14px;
    line-height: 14px;
}

.preview {
    display: flex;
    flex: none;
    align-items: flex-start;
    gap: 3px;
    height: 92px;
    padding: 1px 2px 0;
    border-bottom: 1px solid #999;
}

.thumb-big {
    flex: none;
    width: 77px;
    height: 87px;
}

.name {
    width: 162px;
}

.preview-tools {
    display: flex;
    flex: 1;
    flex-direction: column;
    align-items: center;
    padding-top: 4px;
    gap: 9px;
}

.mini .create {
    width: 22px;
    height: 22px;
}

.mini .reset {
    width: 25px;
    height: 29px;
    margin-top: -4px;
}

.tabs {
    display: flex;
    flex: none;
    align-items: flex-end;
    height: 30px;
    padding-top: 6px;
}

.tab {
    width: 46px;
    height: 21px;
    padding-right: 12px;
    border-top: 1px solid #fff;
    border-right: 2px solid #777;
    font-size: 12px;
    line-height: 20px;
}

.tab.current {
    width: 51px;
    height: 24px;
}

.dropper {
    margin: 0 5px 5px auto;
}

.browse {
    display: flex;
    flex: none;
    align-items: center;
    height: 36px;
    padding: 0 4px 0 8px;
    border-bottom: 1px solid #999;
}

.browse .mini {
    margin-bottom: 4px;
}

.browse .combo {
    flex: 1;
    height: 26px;
    margin: 2px 8px 0 6px;
}

.browse .combo::after {
    top: 10px;
}

.lined select {
    background: linear-gradient(#000, #000) 3px 100% / 126px 1px no-repeat;
}

.mini .nav {
    width: 18px;
    height: 18px;
    margin-right: 9px;
}

.mini .details {
    width: 18px;
    height: 18px;
}

.list {
    display: flex;
    background: #fff;
    overflow: hidden;
}

.colors {
    flex: 1;
    min-height: 0;
}

.folders {
    flex: none;
    height: 104px;
}

.grid {
    display: grid;
    flex: 1;
    grid-template-columns: repeat(3, 62px);
    gap: 2px;
    align-content: start;
    padding: 2px 3px;
}

.swatch {
    height: 62px;
    border: 1px solid #a0a0a0;
    box-shadow: inset 0 0 0 1px #fff;
}

.folder {
    display: flex;
    flex-direction: column;
    align-items: flex-start;
    height: 62px;
    padding: 11px 3px 0;
    border: 1px solid #a0a0a0;
}

.folder svg {
    width: 38px;
    height: 36px;
    margin: 0 7px -6px;
}

.folder span {
    background: #fff;
    font-size: 12px;
    line-height: 16px;
    white-space: nowrap;
}

.scroll {
    display: flex;
    flex: none;
    flex-direction: column;
    width: 20px;
    background: #f1f1f1;
}

.scroll button {
    display: flex;
    align-items: center;
    justify-content: center;
    width: 100%;
    height: 21px;
}

.scroll svg {
    width: 14px;
    height: 14px;
}

.scroll-thumb {
    height: 21px;
    margin-right: 1px;
    background: #cdcdcd;
}

.scroll-end {
    margin-top: auto;
}

.scroll-main {
    padding-top: 2px;
}

.scroll-main .scroll-thumb {
    margin-top: 11px;
}

.sash {
    flex: none;
    height: 9px;
    border-bottom: 1px solid #aaa;
    background: linear-gradient(#777, #777) 0 3px / 100% 2px no-repeat;
}

.second-head {
    flex: none;
    height: 22px;
    padding-left: 5px;
    background: #e4e4e4;
    border-bottom: 1px solid #999;
    font-size: 12px;
    font-weight: 400;
    line-height: 20px;
}

.next-panel {
    flex: none;
    height: 6px;
    margin-top: 1px;
    border: 1px solid #aaa;
}

/* status bar */
.statusbar {
    display: flex;
    flex: none;
    height: 26px;
}

.status-main {
    display: flex;
    flex: 1;
    align-items: center;
    gap: 17px;
    padding: 8px 0 0 7px;
}

.badge {
    flex: none;
    width: 18px;
    height: 18px;
}

.status-main p {
    padding-left: 9px;
    border-left: 1px solid #888;
    margin-left: -4px;
    font-size: 17px;
    line-height: 17px;
}

.status-value {
    display: flex;
    width: 307px;
    padding: 3px 6px 0 0;
    align-items: flex-start;
}

.status-value label {
    width: 52px;
    margin-top: 6px;
    padding-left: 10px;
    border-left: 1px solid #888;
    font-size: 17px;
    line-height: 17px;
}

.status-value input {
    flex: 1;
    min-width: 0;
    height: 23px;
    padding: 5px 3px 0;
    border: 1px solid #abb9c6;
    border-bottom: none;
    background: #ffffe1;
    font-size: 15px;
    line-height: 17px;
}
```
